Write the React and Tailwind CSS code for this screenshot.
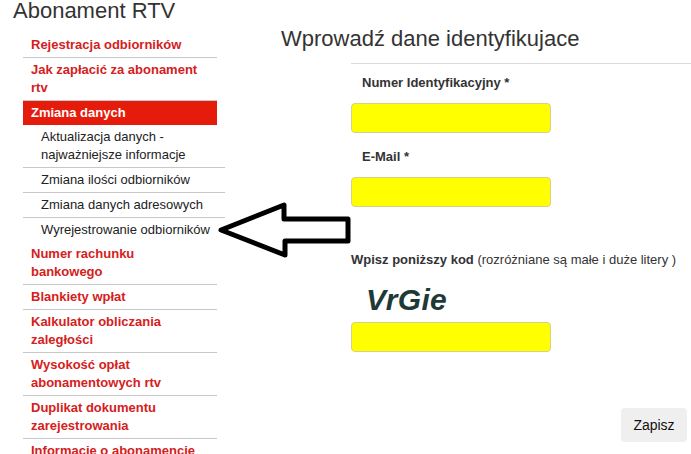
import React from "react";

const MAIN_LINK = "block px-2 py-[3px] text-[13px] leading-[18px] font-bold text-[#d5201c] border-b border-[#c8c8c8]";

const menu = [
  { label: "Rejestracja odbiorników" },
  { label: "Jak zapłacić za abonament rtv" },
  {
    label: "Zmiana danych",
    active: true,
    children: [
      "Aktualizacja danych - najważniejsze informacje",
      "Zmiana ilości odbiorników",
      "Zmiana danych adresowych",
      "Wyrejestrowanie odbiorników",
    ],
  },
  { label: "Numer rachunku bankowego" },
  { label: "Blankiety wpłat" },
  { label: "Kalkulator obliczania zaległości" },
  { label: "Wysokość opłat abonamentowych rtv" },
  { label: "Duplikat dokumentu zarejestrowania" },
  { label: "Informacje o abonamencie" },
];

const SideMenu = () => (
  <ul className="ml-[23px] mt-[11px] w-[194px]">
    {menu.map((item) => (
      <li key={item.label}>
        {item.active ? (
          <a className="block px-2 py-[3px] text-[13px] leading-[18px] font-bold text-white bg-[#e51b0b]">
            {item.label}
          </a>
        ) : (
          <a className={MAIN_LINK}>{item.label}</a>
        )}
        {item.children && (
          <ul className="w-[202px]">
            {item.children.map((c, i) => (
              <li key={c}>
                <a
                  className={
                    "block pl-[18px] pr-2 py-[3px] text-[13px] leading-[18px] text-[#222] " +
                    (i < item.children.length - 1 ? "border-b border-[#c8c8c8]" : "")
                  }
                >
                  {c}
                </a>
              </li>
            ))}
          </ul>
        )}
      </li>
    ))}
  </ul>
);

const YellowInput = ({ className = "" }) => (
  <input
    type="text"
    className={"block w-[200px] h-[30px] rounded-[4px] border border-[#d6d08a] bg-[#ffff00] outline-none " + className}
  />
);

const Arrow = () => (
  <svg
    className="absolute left-0 top-0 pointer-events-none"
    width="691"
    height="454"
    viewBox="0 0 691 454"
  >
    <polygon
      points="221,230 284,205 284,219 348,219 348,241 285,241 285,255"
      fill="none"
      stroke="#000"
      strokeWidth="5"
      strokeLinejoin="round"
    />
  </svg>
);

export default function App() {
  return (
    <div
      className="relative w-[691px] h-[454px] overflow-hidden bg-white flex"
      style={{ fontFamily: "'Liberation Sans', Arial, sans-serif" }}
    >
      <div className="w-[260px] shrink-0">
        <h1 className="pl-[13px] text-[22px] leading-[22px] text-[#333]">Abonament RTV</h1>
        <SideMenu />
      </div>

      <div className="flex-1 flex flex-col">
        <h2 className="mt-[28px] pl-[21px] text-[22px] leading-[22px] text-[#333]">
          Wprowadź dane identyfikujace
        </h2>
        <div className="ml-[91px] mt-[13px] border-t border-[#dcdcdc] flex flex-col">
          <label className="mt-[10px] pl-[11px] text-[13px] leading-[18px] font-bold text-[#333]">
            Numer Identyfikacyjny *
          </label>
          <YellowInput className="mt-[11px]" />
          <label className="mt-[15px] pl-[11px] text-[13px] leading-[18px] font-bold text-[#333]">
            E-Mail *
          </label>
          <YellowInput className="mt-[11px]" />

          <p className="mt-[44px] text-[13px] leading-[18px] text-[#333] whitespace-nowrap">
            <span className="font-bold">Wpisz poniższy kod</span>{" "}
            <span>(rozróżniane są małe i duże litery )</span>
          </p>
          <div className="mt-[14px] pl-[15px] text-[30px] leading-[34px] font-bold italic text-[#1e3a36] tracking-[0.3px]">
            VrGie
          </div>
          <YellowInput className="mt-[5px]" />

          <div className="mt-[56px] flex justify-end pr-[4px]">
            <button className="w-[66px] h-[34px] rounded-[4px] bg-[#efefef] text-[14px] text-[#111]">
              Zapisz
            </button>
          </div>
        </div>
      </div>

      <Arrow />
    </div>
  );
}
